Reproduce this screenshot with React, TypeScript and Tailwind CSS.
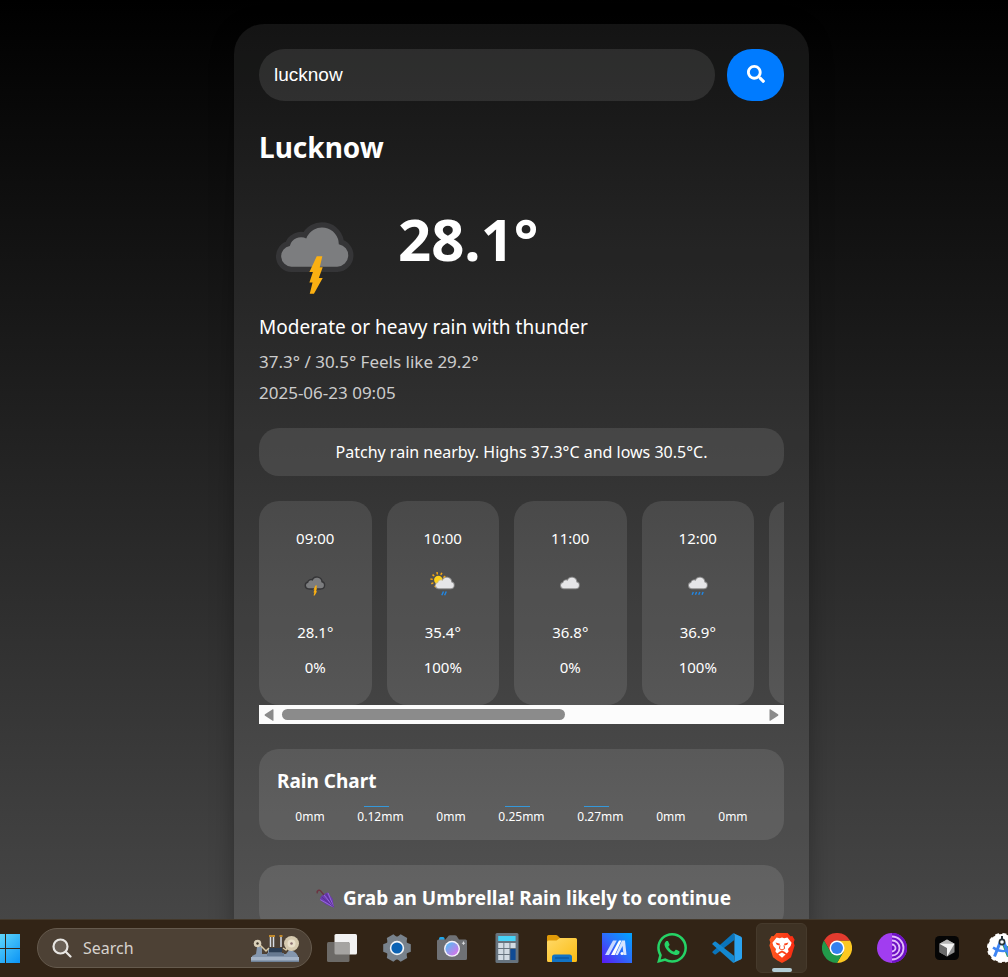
import { useId, useState, type ReactNode } from "react";
import { FaSearch } from "react-icons/fa";
import { SiWhatsapp } from "react-icons/si";

type Sky = "thunder" | "sunRain" | "cloudy" | "rain";

const hours: { time: string; sky: Sky; label: string; temp: string; rain: string }[] = [
  { time: "09:00", sky: "thunder", label: "Thunder", temp: "28.1°", rain: "0%" },
  { time: "10:00", sky: "sunRain", label: "Patchy rain", temp: "35.4°", rain: "100%" },
  { time: "11:00", sky: "cloudy", label: "Cloudy", temp: "36.8°", rain: "0%" },
  { time: "12:00", sky: "rain", label: "Rain", temp: "36.9°", rain: "100%" },
];

const rainfall = [0, 0.12, 0, 0.25, 0.27, 0, 0];

const CLOUD =
  "M18.5 41A6 6 0 0 1 17.6 29.1A6.6 6.6 0 0 1 27 24.8A9.6 9.6 0 0 1 45.6 28.1A6.5 6.5 0 0 1 44.7 41Z";

function Cloud({ dark }: { dark?: boolean }) {
  return (
    <g strokeLinejoin="round">
      <path
        d={CLOUD}
        fill="none"
        stroke={dark ? "#353537" : "#bdbdbd"}
        strokeOpacity={dark ? 1 : 0.55}
        strokeWidth={dark ? 6 : 4}
      />
      <path d={CLOUD} fill={dark ? "#7c7d7f" : "#e6e6e8"} />
    </g>
  );
}

function WeatherIcon({ sky, label, className }: { sky: Sky; label: string; className: string }) {
  return (
    <svg viewBox="0 0 64 64" role="img" aria-label={label} className={className}>
      {sky === "thunder" && (
        <>
          <Cloud dark />
          <path
            d="M33 35H36.2L34.7 41.3H36.4L34.2 47.4H36.4L31.4 56.4H29L30.6 50H28.8L30.8 44H28.8Z"
            fill="#fbb012"
          />
        </>
      )}
      {sky === "sunRain" && (
        <>
          <circle cx="22" cy="23.5" r="9" fill="#ffd21a" />
          <circle
            cx="22"
            cy="23.5"
            r="14.5"
            fill="none"
            stroke="#f7a912"
            strokeWidth="5"
            strokeDasharray="3.2 5.91"
          />
          <g transform="translate(4 0)">
            <Cloud />
          </g>
          <path d="M33 48L29.5 56M39 48L35.5 56" stroke="#1f87e6" strokeWidth="3" />
        </>
      )}
      {sky === "cloudy" && <Cloud />}
      {sky === "rain" && (
        <>
          <Cloud />
          <path
            d="M22 49L19.5 55M29 49L26.5 55M36 49L33.5 55M43 49L40.5 55"
            stroke="#1f87e6"
            strokeWidth="3"
          />
        </>
      )}
    </svg>
  );
}

function Umbrella() {
  return (
    <svg viewBox="0 0 20 20" className="size-[19px]" aria-hidden="true">
      <path d="M1.6 4.6C.4 2.6 2.2.8 4 1.4C5.4 1.9 5.2 3.4 8.6 6.4" fill="none" stroke="#6b3340" strokeWidth="1.5" />
      <path d="M12.6 3.6L17.6 10.4L18.8 19.4L11 16.6L4 11.4Q5 6.6 8.4 6Q9.600 3.800 12.600 3.600Z" fill="#6b3bb0" />
      <path d="M12.600 4L18.600 19M8.600 6.400L18.600 19M4.400 11.200L18.600 19" stroke="#9a6bdc" strokeWidth="1" />
      <path d="M10.400 5L18.600 19M6.200 8.600L18.600 19" stroke="#54298f" strokeWidth=".8" />
    </svg>
  );
}

function Gear() {
  return (
    <svg viewBox="0 0 30 30" className="size-[30px]">
      <g fill="#78828c">
        <circle cx="15" cy="15" r="11.4" />
        {[30, 90, 150, 210, 270, 330].map((angle) => (
          <path key={angle} d="M9.8 5L11.2 1.2H18.8L20.2 5L19 8H11Z" transform={`rotate(${angle} 15 15)`} />
        ))}
      </g>
      <circle cx="15" cy="15" r="7.2" fill="#f4f6f8" />
      <circle cx="15" cy="15" r="5.6" fill="#0b62b4" />
    </svg>
  );
}

function TaskView() {
  return (
    <svg viewBox="0 0 30 28" className="h-7 w-[30px]">
      <rect x="7.5" y="0" width="22.5" height="20.5" rx="1.5" fill="#f2f2f2" />
      <rect x="0" y="8" width="22.5" height="20" rx="1.5" fill="#6c6a67" />
      <path d="M7.5 8H21A1.5 1.5 0 0 1 22.5 9.5V20.5H9A1.5 1.5 0 0 1 7.5 19Z" fill="#a5a4a2" />
    </svg>
  );
}

function Camera() {
  const id = useId();
  return (
    <svg viewBox="0 0 30 26" className="h-[26px] w-[30px]">
      <defs>
        <linearGradient id={id} x1="0" y1="0" x2="1" y2="1">
          <stop offset=".15" stopColor="#5fb6f2" />
          <stop offset=".8" stopColor="#c77bea" />
        </linearGradient>
      </defs>
      <rect x="2" y="2" width="5.5" height="4" rx="1.5" fill="#1ea7ec" />
      <path
        d="M1.5 4.5H8.5L11.5 .8Q12 .2 13 .2H18Q19 .2 19.5 .8L22 4.5H28.5Q30 4.5 30 6V23.5Q30 25 28.5 25H1.5Q0 25 0 23.5V6Q0 4.5 1.5 4.5Z"
        fill="#6f7175"
      />
      <circle cx="15" cy="13.8" r="8" fill="#f4f2fa" />
      <circle cx="15" cy="13.8" r="6.6" fill={`url(#${id})`} />
      <path d="M26.5 6.6V9.8M24.9 8.2H28.1" stroke="#d5d7da" strokeWidth="1.1" />
    </svg>
  );
}

function Calculator() {
  return (
    <svg viewBox="0 0 24 30" className="h-[30px] w-6">
      <rect x=".5" width="23" height="30" rx="1.5" fill="#67737e" />
      <rect x="3.2" y="3" width="17.4" height="5" fill="#46d2f7" />
      {[10, 16, 22].map((y) =>
        [3.2, 9.3, 15.4].map((x) =>
          x > 15 && y > 10 ? null : <rect key={`${x}-${y}`} x={x} y={y} width="5.2" height="5" fill="#d2dbe3" />,
        ),
      )}
      <rect x="15.4" y="16" width="5.2" height="11" fill="#0f4a94" />
    </svg>
  );
}

function Folder() {
  const id = useId();
  return (
    <svg viewBox="0 0 30 27" className="h-[27px] w-[30px]">
      <defs>
        <linearGradient id={id} x1="0" y1="0" x2="1" y2="1">
          <stop offset="0" stopColor="#ffd968" />
          <stop offset="1" stopColor="#fbbc12" />
        </linearGradient>
      </defs>
      <path d="M0 1.5Q0 0 1.5 0H9Q10 0 11 1L13 3H20V10H0Z" fill="#e09a08" />
      <path
        d="M0 7Q0 5.5 1.5 5.5H9.5L13 3H28.5Q30 3 30 4.5V25.5Q30 27 28.5 27H1.5Q0 27 0 25.5Z"
        fill={`url(#${id})`}
      />
      <path d="M5 27V22Q5 19.5 7.5 19.5H22.5Q25 19.5 25 22V27Z" fill="#1173c4" />
      <path d="M8.500 23H21.500" stroke="#0b4a8c" strokeWidth="1.2" strokeLinecap="round" />
    </svg>
  );
}

function MyAsus() {
  const id = useId();
  return (
    <svg viewBox="0 0 30 30" className="size-[30px]">
      <defs>
        <linearGradient id={id} x1="0" y1="1" x2="1" y2="0">
          <stop offset="0" stopColor="#5a18f4" />
          <stop offset=".5" stopColor="#2d6bfa" />
          <stop offset="1" stopColor="#00a5ff" />
        </linearGradient>
      </defs>
      <rect width="30" height="30" fill={`url(#${id})`} />
      <path d="M3 22L11 7.500H14.800L7 22Z" fill="#c9d8ff" />
      <path d="M9 22L17 7.500H19.500L12.800 22Z" fill="#fff" />
      <path d="M20 7.500H23L24.500 22H21.500L20.600 13L15.800 22H13.400Z" fill="#d5e4ff" />
      <circle cx="20" cy="20.600" r="1.500" fill="#fff" />
    </svg>
  );
}

function VsCode() {
  return (
    <svg viewBox="0 0 30 30" className="size-[30px]">
      <path d="M22 7.2L3.600 21.400Q3 21.800 2.400 21.300L.6 19.700Q0 19 .6 18.400L20.500 .7Q21.300 0 22.300 .2Z" fill="#0a74bb" />
      <path d="M22 22.8L3.600 8.600Q3 8.200 2.400 8.700L.6 10.300Q0 11 .6 11.600L20.500 29.300Q21.300 30 22.300 29.800Z" fill="#1488d0" />
      <path
        d="M21.500 .3L28.800 3.500Q30 4.100 30 5.300V24.700Q30 25.900 28.800 26.500L21.500 29.800Q22.400 28.800 22.400 27.500V2.500Q22.400 1.200 21.500 .3Z"
        fill="#2aa3f0"
      />
    </svg>
  );
}

function Brave() {
  const id = useId();
  return (
    <svg viewBox="0 0 30 30" className="size-[30px]">
      <defs>
        <linearGradient id={id} x1="0" y1="0" x2="1" y2="0">
          <stop offset="0" stopColor="#ff5a1f" />
          <stop offset="1" stopColor="#f92a12" />
        </linearGradient>
      </defs>
      <path
        d="M9.4 0H20.600L23.400 3.200L25.400 3L27.600 6.800L26.700 9.600L27.600 12.500L24 24.200L19.600 27.600L15 30L10.400 27.600L6 24.200L2.400 12.500L3.300 9.600L2.400 6.800L4.600 3L6.600 3.200Z"
        fill={`url(#${id})`}
      />
      <path
        d="M9.600 4.600L12.800 5.200L15 4.600L17.200 5.200L20.400 4.600L24.600 9.800L23.600 13L21 16L21.600 18.600L19.800 20.400L17.200 18.600L15 17.800L12.800 18.600L10.200 20.400L8.400 18.600L9 16L6.400 13L5.400 9.800Z"
        fill="#fff"
      />
      <path d="M15 19.600L18.600 21.600L15 24.800L11.400 21.600Z" fill="#fff" />
      <path d="M8.600 9.600L13 10.800L12.400 12.400L9.800 11.800ZM21.400 9.600L17 10.800L17.600 12.400L20.200 11.800Z" fill="#fb4318" />
      <path d="M13 12.400L12.400 15.600L15 17L17.600 15.600L17 12.400" fill="none" stroke="#fb4318" strokeWidth="1" />
    </svg>
  );
}

function Chrome() {
  return (
    <svg viewBox="0 0 30 30" className="size-[30px]">
      <path d="M15 7.5H28A15 15 0 0 1 15 30L21.500 18.750Z" fill="#fcc821" />
      <path d="M2 7.5A15 15 0 0 1 28 7.5H15L8.500 18.750Z" fill="#e33b2e" />
      <path d="M2 7.5L8.500 18.750L15 22L21.500 18.750L15 30A15 15 0 0 1 2 7.5Z" fill="#229a4a" />
      <circle cx="15" cy="15" r="7.500" fill="#fff" />
      <circle cx="15" cy="15" r="6" fill="#3480ee" />
    </svg>
  );
}

function Tor() {
  return (
    <svg viewBox="0 0 30 30" className="size-[30px]">
      <circle cx="15" cy="15" r="15" fill="#a13df0" />
      <path d="M15 0A15 15 0 0 1 15 30Z" fill="#6d10c4" />
      <g fill="none" stroke="#e3bdfb" strokeWidth="1.8">
        <path d="M15 3.500A11.500 11.500 0 0 1 15 26.500" />
        <path d="M15 7.500A7.500 7.500 0 0 1 15 22.500" />
        <path d="M15 11.500A3.500 3.500 0 0 1 15 18.500" />
      </g>
    </svg>
  );
}

function CursorApp() {
  return (
    <svg viewBox="0 0 24 24" className="size-6">
      <rect width="24" height="24" rx="4.500" fill="#050505" />
      <path d="M12 3.500L19.500 7.800V16.200L12 20.500L4.500 16.200V7.800Z" fill="#8d8d8d" />
      <path d="M4.500 7.800L12 12V20.500L4.500 16.200Z" fill="#6a6a6a" />
      <path d="M12 3.500L19.500 7.800L12 9.500L4.500 7.800Z" fill="#b5b5b5" />
      <path d="M4.500 7.800H19.500L12 20.500V12Z" fill="#f3f3f3" />
    </svg>
  );
}

function AndroidStudio() {
  return (
    <svg viewBox="0 0 30 30" className="size-[30px]">
      <circle cx="15" cy="15" r="14" fill="#fff" stroke="#fff" strokeWidth="2" strokeDasharray="4 3.330" />
      <path d="M15 11L26 15Q27 23 20 24Z" fill="#2f9e5f" />
      <path d="M13.500 8.500L7.500 23.500M16.500 8.500L22.500 23.500" stroke="#3f86f4" strokeWidth="3" />
      <path d="M6 14.500Q14 20.500 23 16.500" fill="none" stroke="#3f86f4" strokeWidth="2.400" />
      <path d="M15 3V6" stroke="#263238" strokeWidth="2" />
      <circle cx="15" cy="9" r="2.600" fill="#fff" stroke="#263238" strokeWidth="1.600" />
    </svg>
  );
}

function Lathe() {
  return (
    <svg viewBox="0 0 50 28" className="h-7 w-[50px]" aria-hidden="true">
      <path d="M2 28V22L6 20L7 13H12V20H18V14H32V20H36L40 15L46 19L48 22V28Z" fill="#8496ad" />
      <path d="M1 23H49V28H1Z" fill="#a4b3c6" />
      <path d="M1 26.500H49V28H1Z" fill="#6f8197" />
      <rect x="19" y="14" width="13" height="4.500" fill="#2b3e55" />
      <rect x="17" y="19" width="17" height="3" fill="#677a92" />
      <path d="M20.500 2V13M23.500 2V13M31 2V13" stroke="#d8dde4" strokeWidth="1.500" />
      <path d="M19 2H25M29.500 2H32.500" stroke="#c28a2c" strokeWidth="2" />
      <path d="M10 11L16 17L19 14M33 14L36 16L39 11" fill="none" stroke="#d9cba6" strokeWidth="1.500" />
      <circle cx="7.500" cy="9.500" r="3.800" fill="#d9cfb8" />
      <circle cx="7.500" cy="9.500" r="1.200" fill="#3c3428" />
      <circle cx="41.500" cy="9.500" r="7.500" fill="#d5c9ae" />
      <circle cx="41.500" cy="9.500" r="4" fill="#e9e0ca" />
      <circle cx="41.500" cy="9.500" r="1.300" fill="#8b6f72" />
    </svg>
  );
}

function TaskButton({ label, active, children }: { label: string; active?: boolean; children: ReactNode }) {
  return (
    <button
      type="button"
      aria-label={label}
      className={
        active
          ? "relative mx-[2px] flex h-[50px] w-[51px] shrink-0 items-center justify-center rounded-md border border-[#463a2c] bg-[#3e3224]"
          : "flex h-[50px] w-[55px] shrink-0 items-center justify-center"
      }
    >
      {children}
      {active && <span className="absolute bottom-0 left-1/2 h-1 w-5 -translate-x-1/2 rounded-full bg-[#b3cdd6]" />}
    </button>
  );
}

function Taskbar() {
  return (
    <footer className="flex h-[58px] shrink-0 items-center overflow-hidden border-t border-[#43382a] bg-[#322416] pb-px">
      <button type="button" aria-label="Start" className="mr-[17px] shrink-0">
        <svg viewBox="9 0 20 29" className="h-[29px] w-5">
          <defs>
            <linearGradient id="start-fill" x1="0" y1="0" x2="1" y2="1">
              <stop offset="0" stopColor="#6fe3fd" />
              <stop offset="1" stopColor="#0a93f5" />
            </linearGradient>
          </defs>
          <path d="M0 0H14V14H0ZM15 0H29V14H15ZM0 15H14V29H0ZM15 15H29V29H15Z" fill="url(#start-fill)" />
        </svg>
      </button>
      <label className="mr-[2px] flex h-10 w-[275px] shrink-0 items-center rounded-full border border-[#655a4d] bg-[#4d4135] pr-[11px] pl-3.5">
        <svg viewBox="0 0 20 20" className="size-5" fill="none" stroke="#e8e6e3" strokeWidth="2.200" strokeLinecap="round">
          <circle cx="8.500" cy="8.500" r="7" fill="#6a6056" />
          <path d="M13.700 13.700L18.500 18.500" />
        </svg>
        <input
          type="text"
          aria-label="Search apps"
          placeholder="Search"
          className="ml-[11px] min-w-0 flex-1 bg-transparent text-base text-[#d6d2cd] outline-none placeholder:text-[#d6d2cd]"
        />
        <Lathe />
      </label>
      <TaskButton label="Task view"><TaskView /></TaskButton>
      <TaskButton label="Settings"><Gear /></TaskButton>
      <TaskButton label="Camera"><Camera /></TaskButton>
      <TaskButton label="Calculator"><Calculator /></TaskButton>
      <TaskButton label="File Explorer"><Folder /></TaskButton>
      <TaskButton label="MyASUS"><MyAsus /></TaskButton>
      <TaskButton label="WhatsApp"><SiWhatsapp className="size-[30px] text-[#25d366]" /></TaskButton>
      <TaskButton label="Visual Studio Code"><VsCode /></TaskButton>
      <TaskButton label="Brave" active><Brave /></TaskButton>
      <TaskButton label="Chrome"><Chrome /></TaskButton>
      <TaskButton label="Tor Browser"><Tor /></TaskButton>
      <TaskButton label="Cursor"><CursorApp /></TaskButton>
      <TaskButton label="Android Studio"><AndroidStudio /></TaskButton>
    </footer>
  );
}

function ScrollBar() {
  return (
    <div className="flex h-[19px] items-center bg-[#fcfcfc] px-[5px]" aria-hidden="true">
      <svg viewBox="0 0 10 12" className="h-3 w-2.5" fill="#8b8b8b">
        <path d="M9.500 .8V11.200Q9.500 12 8.700 11.700L1 6.800Q0 6 1 5.200L8.700 .3Q9.500 0 9.500 .8Z" />
      </svg>
      <div className="mx-2 flex-1">
        <div className="h-[11px] w-[59%] rounded-full bg-[#8b8b8b]" />
      </div>
      <svg viewBox="0 0 10 12" className="h-3 w-2.5" fill="#8b8b8b">
        <path d="M.5 .8V11.200Q.5 12 1.300 11.700L9 6.800Q10 6 9 5.200L1.300 .3Q.5 0 .5 .8Z" />
      </svg>
    </div>
  );
}

export default function App() {
  const [city, setCity] = useState("lucknow");

  return (
    <div className="flex h-screen flex-col overflow-hidden font-['Noto_Sans','Open_Sans',sans-serif] text-white">
      <main className="min-h-0 flex-1 overflow-hidden bg-linear-to-b/srgb from-black to-[#464646] pt-6 pl-[35px]">
        <div className="mx-auto flex max-w-[575px] flex-col rounded-[30px] bg-white/7 p-[25px] shadow-[0_5px_25px_rgba(0,0,0,0.3)]">
          <form className="flex gap-3" onSubmit={(event) => event.preventDefault()}>
            <input
              type="text"
              aria-label="City"
              value={city}
              onChange={(event) => setCity(event.target.value)}
              className="h-[52px] min-w-0 flex-1 rounded-[26px] bg-white/10 px-[15px] font-['Liberation_Sans',sans-serif] text-[19px] text-white outline-none"
            />
            <button
              type="submit"
              aria-label="Search"
              className="flex h-[52px] w-[57px] items-center justify-center rounded-[25px] bg-[#007bff] pb-0.5"
            >
              <FaSearch className="size-[18px]" />
            </button>
          </form>

          <h1 className="mt-[26px] text-[28px] leading-10 font-bold">Lucknow</h1>

          <section className="mt-7">
            <div className="flex gap-[27px]">
              <WeatherIcon sky="thunder" label="Thunderstorm" className="size-28" />
              <p className="pt-0.5 text-[58px] leading-[84px] font-bold">28.1°</p>
            </div>
            <p className="mt-1.5 text-[19px] leading-7">Moderate or heavy rain with thunder</p>
            <p className="mt-[7px] text-[17px] leading-7 text-[#cccccc]">37.3° / 30.5° Feels like 29.2°</p>
            <p className="mt-[3px] text-[17px] leading-7 text-[#cccccc]">2025-06-23 09:05</p>
          </section>

          <p className="mt-[21px] rounded-[20px] bg-white/10 px-4 py-2.5 text-center text-base leading-7">
            Patchy rain nearby. Highs 37.3°C and lows 30.5°C.
          </p>

          <section className="mt-[25px]" aria-label="Hourly forecast">
            <ul className="grid auto-cols-[calc((100%-75px)/4)] grid-flow-col gap-[15px] overflow-hidden">
              {hours.map((hour) => (
                <li
                  key={hour.time}
                  className="flex h-[204px] flex-col items-center rounded-[20px] bg-white/10 pt-[25px] text-[15px] leading-6"
                >
                  <p>{hour.time}</p>
                  <WeatherIcon sky={hour.sky} label={hour.label} className="mt-[19px] mb-[21px] size-[30px]" />
                  <p>{hour.temp}</p>
                  <p className="mt-[11px]">{hour.rain}</p>
                </li>
              ))}
              <li className="rounded-[20px] bg-white/10" aria-hidden="true" />
            </ul>
            <ScrollBar />
          </section>

          <section className="mt-[25px] h-[91px] rounded-[20px] bg-white/10 px-[18px] pt-[18px]">
            <h2 className="text-[19px] leading-7 font-bold">Rain Chart</h2>
            <div className="mt-[11px] flex justify-around px-0.5">
              {rainfall.map((amount, index) => (
                <div key={index} className="flex flex-col items-center">
                  <div className={amount > 0 ? "mr-2 h-px w-[25px] bg-[#3498db]" : "h-px w-[25px]"} />
                  <span className="text-xs leading-5">{amount}mm</span>
                </div>
              ))}
            </div>
          </section>

          <section className="mt-[25px] rounded-[20px] bg-white/10 px-5 py-[19px]">
            <h2 className="flex items-center justify-center gap-2 pl-1 text-[19px] leading-7 font-bold">
              <Umbrella />
              Grab an Umbrella! Rain likely to continue
            </h2>
          </section>
        </div>
      </main>
      <Taskbar />
    </div>
  );
}
